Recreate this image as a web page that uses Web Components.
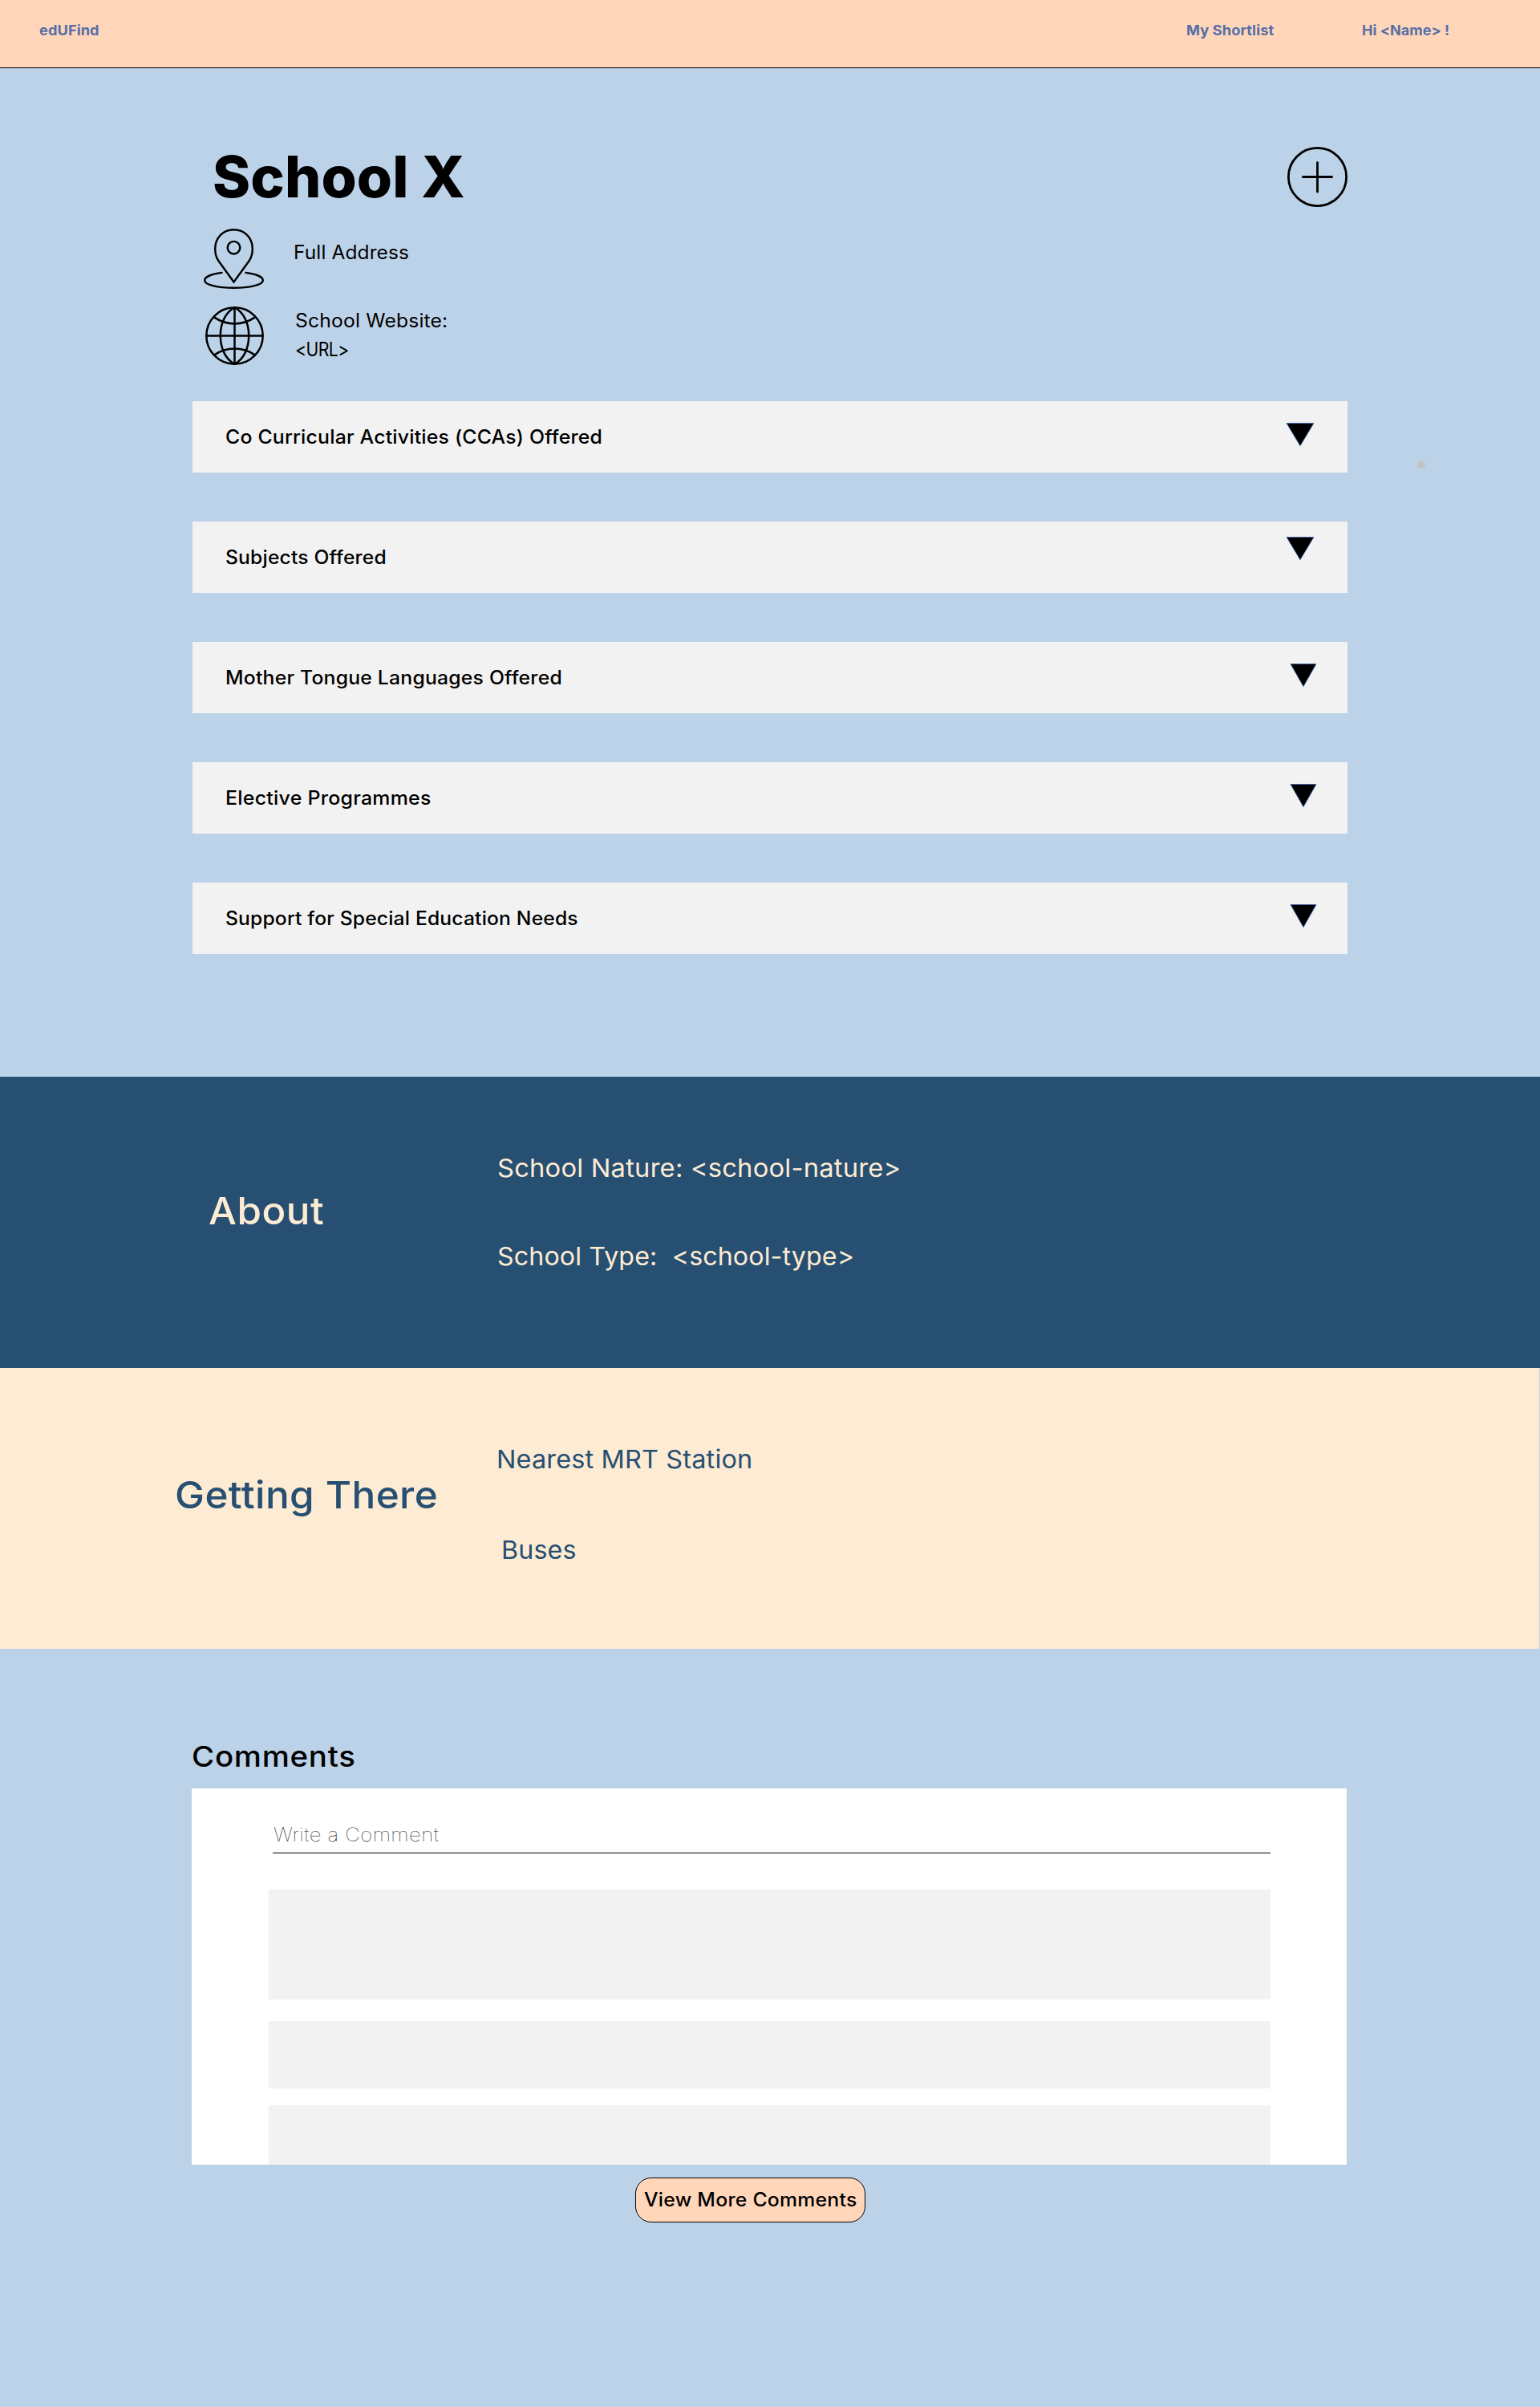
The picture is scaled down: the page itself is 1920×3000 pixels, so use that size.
<!DOCTYPE html>
<html lang="en">
<head>
<meta charset="utf-8">
<title>edUFind – School X</title>
<style>
  body { margin: 0; background: #bcd2e8; font-family: Inter, "Open Sans", sans-serif; color: #000; }
</style>
</head>
<body>
<school-page></school-page>
<script>
const define = (name, html, init) => {
  const tpl = document.createElement('template');
  tpl.innerHTML = html;
  customElements.define(name, class extends HTMLElement {
    connectedCallback() {
      if (this.shadowRoot) return;
      this.attachShadow({ mode: 'open' }).appendChild(tpl.content.cloneNode(true));
      if (init) init.call(this, this.shadowRoot);
    }
  });
};

/* One line of type, widened evenly so that its ink spans exactly `w` pixels.
   Most of the width goes to the glyphs, the rest to the tracking. */
define('fit-text', `
<style>
  :host { display: block; flex: none; }
  span { display: block; width: max-content; white-space: pre; transform-origin: 0 0; }
</style><span><slot></slot></span>`, function (root) {
  const w = +this.getAttribute('w'), size = +this.getAttribute('size') || 23;
  const weight = this.getAttribute('weight') || 400;
  const text = this.textContent, font = size * 1.025;
  const ctx = document.createElement('canvas').getContext('2d');
  ctx.font = `${weight} ${font}px Inter, "Open Sans", sans-serif`;
  const m = ctx.measureText(text);
  const left = m.actualBoundingBoxLeft, ink = m.actualBoundingBoxRight + left;
  const scale = Math.pow(w / ink, .75);
  this.style.cssText += `;width:${w}px;height:${size}px;font-size:${font}px;font-weight:${weight}`;
  const s = root.querySelector('span');
  const nudge = size > 20 && size < 40 ? 2 : 0;
  s.style.lineHeight = (1.728 * size - .728 * font + nudge) + 'px';
  s.style.letterSpacing = (w / scale - ink) / (text.length - 1) + 'px';
  s.style.marginLeft = left * scale + 'px';
  s.style.transform = `scaleX(${scale})`;
});

define('icon-plus', `
<style>:host{display:block;flex:none;width:75px;height:75px}svg{display:block}</style>
<svg width="75" height="75" viewBox="0 0 75 75" fill="none" stroke="#000" stroke-width="2.8" stroke-linecap="round">
  <circle cx="37.5" cy="37.5" r="36.1"/><path d="M37.5 19.6V56M19.4 37.5H55.6"/>
</svg>`);

define('icon-pin', `
<style>:host{display:block;flex:none;width:75px;height:75px}svg{display:block}</style>
<svg width="75" height="75" viewBox="0 0 75 75" fill="none" stroke="#000" stroke-width="2.4" stroke-linecap="round">
  <path d="M37.5 66.5 L18.5 40.3 C15.8 36.4 14.2 31 14.2 25 C14.2 11 24.5 1.2 37.5 1.2 C50.5 1.2 60.8 11 60.8 25 C60.8 31 59.2 36.4 56.5 40.3 Z"/>
  <circle cx="37.5" cy="23.7" r="7.8"/>
  <path d="M22.6 54.9 C10 56.4 1.2 60 1.2 64.4 C1.2 69.8 17 73.8 37.5 73.8 C58 73.8 73.8 69.8 73.8 64.4 C73.8 60 65 56.4 52.4 54.9"/>
</svg>`);

define('icon-globe', `
<style>:host{display:block;flex:none;width:73px;height:73px}svg{display:block}</style>
<svg width="73" height="73" viewBox="0 0 73 73" fill="none" stroke="#000" stroke-width="2.5">
  <circle cx="36.5" cy="36.5" r="35.2"/>
  <path d="M36.5 1.2V71.8M1.2 36.5H71.8"/>
  <path d="M36.5 1.2C25 7.5 18.8 21 18.8 36.5C18.8 52 25 65.5 36.5 71.8M36.5 1.2C48 7.5 54.2 21 54.2 36.5C54.2 52 48 65.5 36.5 71.8"/>
  <path d="M11 13.4Q22.5 21.4 36.5 21.4Q50.5 21.4 62 13.4M11 60.6Q22.5 52.6 36.5 52.6Q50.5 52.6 62 60.6"/>
</svg>`);

define('site-header', `
<style>
  :host { display: flex; box-sizing: border-box; height: 85px; padding: 29px 114px 0 48.6px;
    background: #ffd6ba; border-bottom: 1px solid #000; color: #566fa6; }
  nav { display: flex; gap: 110.7px; margin-left: auto; }
</style>
<fit-text w="74.3" size="17.4" weight="700">edUFind</fit-text>
<nav>
  <fit-text w="108.6" size="17.4" weight="700">My Shortlist</fit-text>
  <fit-text w="107" size="17.4" weight="700">Hi &lt;Name&gt; !</fit-text>
</nav>`);

define('info-row', `
<style>
  :host { display: flex; align-items: flex-start; }
  div { display: flex; flex-direction: column; gap: 13px; }
</style>
<slot name="icon"></slot><div><slot></slot></div>`);

define('accordion-bar', `
<style>
  :host { display: flex; align-items: flex-start; box-sizing: border-box; height: 89px;
    padding-left: 41.6px; background: #f2f2f2; }
  ::slotted(fit-text) { margin-top: 32.8px; }
  svg { display: block; margin: var(--arrow-top, 27px) var(--arrow-right, 38px) 0 auto; }
</style>
<slot></slot>
<svg height="30" viewBox="0 0 34 30" preserveAspectRatio="none"><path d="M1 .5H33L17 28.7Z" fill="#000" stroke="#4668ad" stroke-width=".9"/></svg>`,
function (root) {
  root.querySelector('svg').setAttribute('width', this.getAttribute('arrow') || 34);
});

define('school-hero', `
<style>
  :host { display: block; position: relative; box-sizing: border-box; height: 1257px; padding: 98px 240px 0; }
  .top { display: flex; justify-content: space-between; align-items: flex-start; padding-left: 27.3px; }
  .top fit-text { margin-top: 3px; }
  .address { margin: 27px 0 0 14px; }
  .address fit-text { margin: 18.4px 0 0 39px; }
  .site { margin: 22px 0 0 16px; }
  .site fit-text { margin-left: 39.7px; }
  .site fit-text:nth-of-type(1) { margin-top: 6.1px; }
  .site fit-text:nth-of-type(2) { margin-left: 41px; }
  .list { display: flex; flex-direction: column; gap: 61px; margin-top: 45px; }
  .dot { position: absolute; left: 1767px; top: 488.5px; width: 10px; height: 10px; border-radius: 50%; background: #c4c4c4; }
</style>
<div class="top"><fit-text w="311.4" size="69.5" weight="800">School X</fit-text><icon-plus></icon-plus></div>
<info-row class="address"><icon-pin slot="icon"></icon-pin><fit-text w="141.4">Full Address</fit-text></info-row>
<info-row class="site"><icon-globe slot="icon"></icon-globe><fit-text w="187.3">School Website:</fit-text><fit-text w="64">&lt;URL&gt;</fit-text></info-row>
<div class="list">
  <accordion-bar arrow="36" style="--arrow-right:41px"><fit-text w="467.2" weight="500">Co Curricular Activities (CCAs) Offered</fit-text></accordion-bar>
  <accordion-bar arrow="36" style="--arrow-right:41px;--arrow-top:19px"><fit-text w="198" weight="500">Subjects Offered</fit-text></accordion-bar>
  <accordion-bar><fit-text w="417" weight="500">Mother Tongue Languages Offered</fit-text></accordion-bar>
  <accordion-bar><fit-text w="254.6" weight="500">Elective Programmes</fit-text></accordion-bar>
  <accordion-bar><fit-text w="437.8" weight="500">Support for Special Education Needs</fit-text></accordion-bar>
</div>
<span class="dot"></span>`);

define('info-band', `
<style>
  :host { display: grid; grid-template-columns: 620.6px 1fr; align-items: start; box-sizing: border-box; }
  .items { display: flex; flex-direction: column; gap: var(--gap); padding-top: 98.4px; }
</style>
<slot name="title"></slot><div class="items"><slot></slot></div>`);

define('comment-panel', `
<style>
  :host { display: flex; flex-direction: column; box-sizing: border-box; width: 1440px; height: 469px;
    padding: 0 95px 0 96px; background: #fff; overflow: hidden; }
  .write { flex: none; box-sizing: border-box; height: 81px; margin: 0 0 45px 5px; padding: 46.1px 0 0 .7px; border-bottom: 1px solid #000; }
  .card { flex: none; background: #f2f2f2; }
  .a { height: 137px; margin-bottom: 27px; }
  .b { height: 84px; margin-bottom: 21px; }
  .c { height: 84px; }
</style>
<div class="write"><fit-text w="206.3" weight="100">Write a Comment</fit-text></div>
<div class="card a"></div><div class="card b"></div><div class="card c"></div>`);

define('more-button', `
<style>
  :host { display: block; }
  button { display: flex; align-items: flex-start; box-sizing: border-box; width: 287px; height: 56px; margin: 0;
    padding: 14.8px 0 0 10px; border: 1px solid #000; border-radius: 20px; background: #ffd6ba;
    font: inherit; color: #000; text-align: left; }
</style>
<button><fit-text w="264.6" weight="500">View More Comments</fit-text></button>`);

define('school-page', `
<style>
  :host { display: block; height: 3000px; }
  .about { height: 363px; background: #264f72; color: #feebd3; --gap: 79.2px; }
  .about [slot] { margin: 144px 0 0 261.2px; }
  .about fit-text:not([slot]) { margin-left: .7px; }
  .getting { width: 1919px; height: 350px; background: #feebd3; color: #264f72; --gap: 82.2px; }
  .getting [slot] { margin: 135.3px 0 0 220.2px; }
  .getting .buses { margin-left: 6.2px; }
  .comments { padding: 116.8px 0 0 239.7px; }
  comment-panel { margin: 22.6px 0 0 -.7px; }
  more-button { margin: 16px 0 0 552.3px; }
</style>
<site-header></site-header>
<school-hero></school-hero>
<info-band class="about">
  <fit-text slot="title" w="142.7" size="46" weight="500">About</fit-text>
  <fit-text w="500.1" size="30.8">School Nature: &lt;school-nature&gt;</fit-text>
  <fit-text w="442" size="30.8">School Type:  &lt;school-type&gt;</fit-text>
</info-band>
<info-band class="getting">
  <fit-text slot="title" w="323.9" size="46" weight="500">Getting There</fit-text>
  <fit-text w="315.4" size="30.8">Nearest MRT Station</fit-text>
  <fit-text class="buses" w="90.7" size="30.8">Buses</fit-text>
</info-band>
<section class="comments">
  <fit-text w="201.6" size="34.6" weight="500">Comments</fit-text>
  <comment-panel></comment-panel>
  <more-button></more-button>
</section>`);
</script>
</body>
</html>
